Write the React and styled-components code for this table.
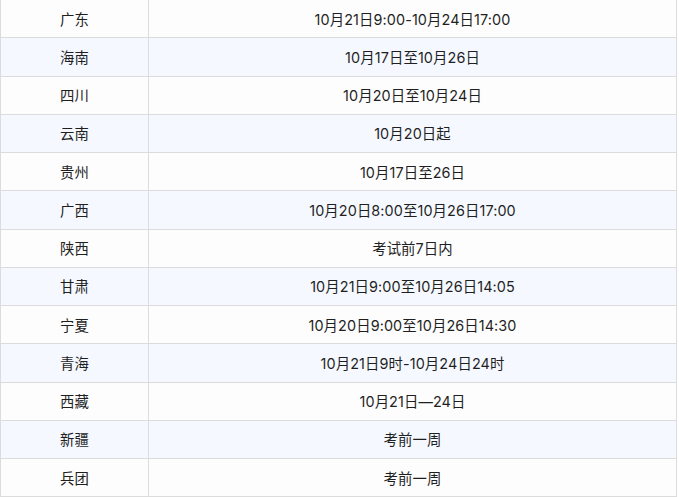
import React from "react";
import styled, { createGlobalStyle } from "styled-components";

const Global = createGlobalStyle`
  html, body { margin: 0; padding: 0; background: #ffffff; }
  body { font-family: Inter, "Noto Sans CJK SC", sans-serif; }
`;

const Table = styled.div`
  width: 677px;
  display: grid;
  grid-template-columns: 147px 1fr;
  border-left: 1px solid #dcdcdc;
  border-right: 1px solid #dcdcdc;
  box-sizing: border-box;
`;

const Row = styled.div`
  display: contents;
`;

const Cell = styled.div`
  height: 38.25px;
  box-sizing: border-box;
  border-bottom: 1px solid #dcdcdc;
  border-left: ${(p) => (p.$first ? "none" : "1px solid #dcdcdc")};
  background: ${(p) => (p.$alt ? "#f5f9ff" : "#fdfdfd")};
  display: flex;
  align-items: center;
  justify-content: center;
  font-family: Inter, "Noto Sans CJK SC", sans-serif;
  font-size: 14.4px;
  letter-spacing: 0.1px;
  color: #1f1f1f;
  padding-bottom: 1px;
`;

const data = [
  ["广东", "10月21日9:00-10月24日17:00"],
  ["海南", "10月17日至10月26日"],
  ["四川", "10月20日至10月24日"],
  ["云南", "10月20日起"],
  ["贵州", "10月17日至26日"],
  ["广西", "10月20日8:00至10月26日17:00"],
  ["陕西", "考试前7日内"],
  ["甘肃", "10月21日9:00至10月26日14:05"],
  ["宁夏", "10月20日9:00至10月26日14:30"],
  ["青海", "10月21日9时-10月24日24时"],
  ["西藏", "10月21日—24日"],
  ["新疆", "考前一周"],
  ["兵团", "考前一周"],
];

export default function App() {
  return (
    <>
      <Global />
      <Table>
        {data.map(([p, t], i) => (
          <Row key={p}>
            <Cell $first $alt={i % 2 === 1}>{p}</Cell>
            <Cell $alt={i % 2 === 1}>{t}</Cell>
          </Row>
        ))}
      </Table>
    </>
  );
}
